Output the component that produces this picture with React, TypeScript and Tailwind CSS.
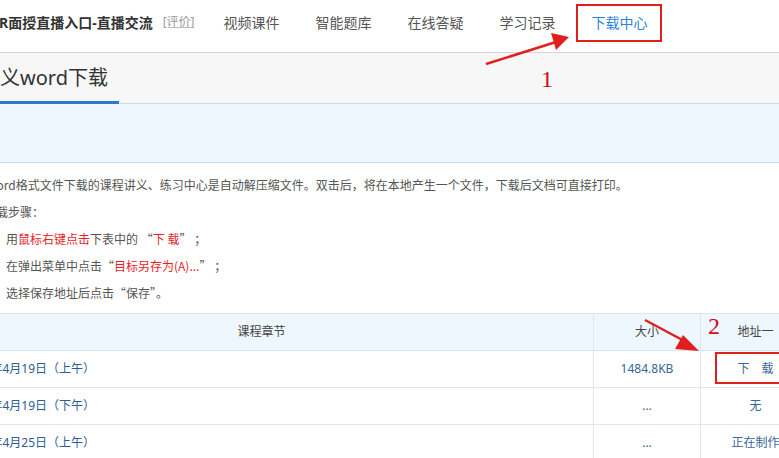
import React from "react"

const navItems = ["视频课件", "智能题库", "在线答疑", "学习记录"]

const rows = [
  { name: "2018年4月19日（上午）", size: "1484.8KB", link: "下　载" },
  { name: "2018年4月19日（下午）", size: "...", link: "无" },
  { name: "2018年4月25日（上午）", size: "...", link: "正在制作" },
]

export default function App() {
  return (
    <div className="relative w-[779px] h-[458px] overflow-hidden bg-white font-['Noto_Sans','Noto_Sans_CJK_SC',sans-serif] text-[#333]">
      {/* top nav */}
      <header className="h-[53px] border-b border-[#d4d4d4] flex items-center pb-[8px]">
        <span className="text-[14px] font-bold text-[#333] -ml-[1px] whitespace-nowrap">R面授直播入口-直播交流</span>
        <span className="ml-[10px] text-[12px] text-[#999] underline decoration-[#bbb] whitespace-nowrap">[评价]</span>
        <nav className="ml-[29px] flex gap-[35px] text-[14px] text-[#555]">
          {navItems.map((item) => (
            <span key={item} className="w-[57px] whitespace-nowrap">{item}</span>
          ))}
          <span className="w-[57px] whitespace-nowrap text-[#2b84d6]">下载中心</span>
        </nav>
      </header>

      {/* tab band */}
      <div className="h-[51px] bg-[#f7f7f7] border-b border-[#c8dcec] flex items-end">
        <div className="w-[119px] h-[51px] -mb-px border-b-[3px] border-[#2a78cf] flex items-center pt-[1px] text-[20px] text-[#333] whitespace-nowrap">
          义word下载
        </div>
      </div>

      {/* info band */}
      <div className="h-[59px] bg-[#eef7fe] border-b border-[#c8dcec]" />

      {/* notes */}
      <div className="pt-[8px] text-[12px] leading-[27px] text-[#555] whitespace-nowrap font-['Noto_Sans_CJK_SC',sans-serif]">
        <p className="-ml-[14px]">Word格式文件下载的课程讲义、练习中心是自动解压缩文件。双击后，将在本地产生一个文件，下载后文档可直接打印。</p>
        <p className="-ml-[16px]">下载步骤：</p>
        <p className="pl-[6px]">
          用<span className="text-[#e8231f]">鼠标右键点击</span>下表中的 “<span className="text-[#e8231f]">下 载</span>” ；
        </p>
        <p className="pl-[6px]">
          在弹出菜单中点击“<span className="text-[#e8231f]">目标另存为(A)...</span>” ；
        </p>
        <p className="pl-[6px]">选择保存地址后点击“保存”。</p>
      </div>

      {/* table */}
      <div className="mt-[7px] -ml-[70px] w-[880px] text-[12px]">
        <div className="grid grid-cols-[664px_107px_109px] h-[38px] bg-[#eef6fe] border-y border-[#d9e6f2] text-[#444]">
          <div className="flex items-center justify-center border-r border-[#d9e6f2]">课程章节</div>
          <div className="flex items-center justify-center border-r border-[#d9e6f2]">大小</div>
          <div className="flex items-center justify-center">地址一</div>
        </div>
        {rows.map((r) => (
          <div key={r.name} className="grid grid-cols-[664px_107px_109px] h-[37px] border-b border-[#dde8f2] text-[#2f5d91]">
            <div className="flex items-center pl-[33px] border-r border-[#dde8f2] whitespace-nowrap">{r.name}</div>
            <div className="flex items-center justify-center border-r border-[#dde8f2] text-[#3a6698]">{r.size}</div>
            <div className="flex items-center justify-center whitespace-nowrap text-[#3a6698]">{r.link}</div>
          </div>
        ))}
      </div>

      {/* annotations */}
      <div className="absolute left-[576px] top-[4px] w-[86px] h-[38px] border-2 border-[#e0201c]" />
      <div className="absolute left-[715px] top-[352px] w-[66px] h-[32px] border-2 border-[#e0201c]" />
      <span className="absolute left-[541px] top-[66px] text-[24px] leading-[26px] text-[#c8101a] font-['Liberation_Serif',serif]">1</span>
      <span className="absolute left-[708px] top-[313px] text-[24px] leading-[26px] text-[#c8101a] font-['Liberation_Serif',serif]">2</span>
      <svg className="absolute left-0 top-0 pointer-events-none" width="779" height="458" viewBox="0 0 779 458">
        <line x1="486" y1="64" x2="556" y2="42" stroke="#e0201c" strokeWidth="2.5" />
        <polygon points="569,37 551,33 556,50" fill="#e0201c" />
        <line x1="645" y1="320" x2="688" y2="343" stroke="#e0201c" strokeWidth="2.5" />
        <polygon points="699,351 683,335 675,349" fill="#e0201c" />
      </svg>
    </div>
  )
}
